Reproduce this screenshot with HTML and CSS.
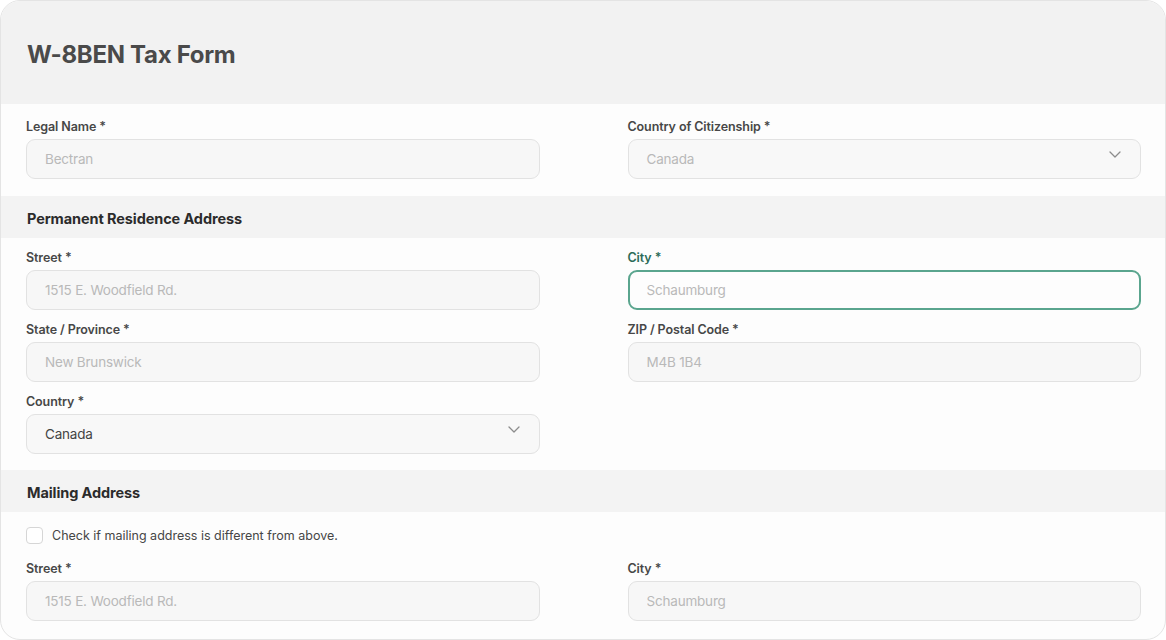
FILE: index.html
```html
<!DOCTYPE html>
<html lang="en">
<head>
    <meta charset="UTF-8">
    <meta name="viewport" content="width=device-width, initial-scale=1.0">
    <title>W-8BEN Tax Form</title>
    <link rel="stylesheet" href="styles.css">
</head>
<body>
    <div class="card">
        <div class="card-header">
            <h1>W-8BEN Tax Form</h1>
        </div>

        <div class="section first">
            <div class="grid">
                <div class="field">
                    <label>Legal Name *</label>
                    <input class="input" placeholder="Bectran" disabled>
                </div>
                <div class="field">
                    <label>Country of Citizenship *</label>
                    <div class="input select disabled">
                        <span>Canada</span>
                        <svg class="chevron" viewBox="0 0 12 7" width="12" height="7"><path d="M1 1l5 5 5-5"/></svg>
                    </div>
                </div>
            </div>
        </div>

        <div class="section-title">Permanent Residence Address</div>
        <div class="section">
            <div class="grid">
                <div class="field">
                    <label>Street *</label>
                    <input class="input" placeholder="1515 E. Woodfield Rd." disabled>
                </div>
                <div class="field focused">
                    <label>City *</label>
                    <input class="input" placeholder="Schaumburg">
                </div>
                <div class="field">
                    <label>State / Province *</label>
                    <input class="input" placeholder="New Brunswick" disabled>
                </div>
                <div class="field">
                    <label>ZIP / Postal Code *</label>
                    <input class="input" placeholder="M4B 1B4" disabled>
                </div>
                <div class="field">
                    <label>Country *</label>
                    <div class="input select">
                        <span>Canada</span>
                        <svg class="chevron" viewBox="0 0 12 7" width="12" height="7"><path d="M1 1l5 5 5-5"/></svg>
                    </div>
                </div>
            </div>
        </div>

        <div class="section-title">Mailing Address</div>
        <div class="section last">
            <label class="check">
                <span class="box"></span>
                Check if mailing address is different from above.
            </label>
            <div class="grid">
                <div class="field">
                    <label>Street *</label>
                    <input class="input" placeholder="1515 E. Woodfield Rd." disabled>
                </div>
                <div class="field">
                    <label>City *</label>
                    <input class="input" placeholder="Schaumburg" disabled>
                </div>
            </div>
        </div>
    </div>
</body>
</html>
```
FILE: styles.css
```css
body {
    margin: 0;
    font-family: 'Inter', 'Liberation Sans', sans-serif;
    background-color: #ffffff;
}

.card {
    box-sizing: border-box;
    width: 1166px;
    height: 640px;
    border: 1px solid #e4e4e4;
    border-radius: 20px;
    overflow: hidden;
    background-color: #fdfdfd;
}

.card-header {
    background-color: #f2f2f2;
    padding: 39px 26px 34px;
}

h1 {
    margin: 0;
    font-size: 24px;
    line-height: 30px;
    font-weight: 700;
    color: #4a4a4a;
    letter-spacing: -0.3px;
}

.section {
    padding: 12px 24px 16px 25px;
}
.section.first { padding-top: 15px; padding-bottom: 17px; }
.section.last { padding-top: 14px; }

.section-title {
    box-sizing: border-box;
    background-color: #f3f3f3;
    height: 42px;
    line-height: 42px;
    padding: 2px 26px 0;
    font-size: 14.5px;
    font-weight: 700;
    color: #2b2b2b;
    letter-spacing: -0.1px;
}

.grid {
    display: grid;
    grid-template-columns: 1fr 1fr;
    column-gap: 88px;
    row-gap: 12px;
}

.field label {
    display: block;
    font-size: 12.5px;
    line-height: 16px;
    font-weight: 600;
    color: #474747;
    margin-bottom: 4px;
    letter-spacing: -0.1px;
}

.input {
    box-sizing: border-box;
    display: block;
    width: 100%;
    height: 40px;
    margin: 0;
    padding: 0 18px;
    border: 1px solid #e2e2e2;
    border-radius: 9px;
    background-color: #f7f7f7;
    font-family: inherit;
    font-size: 13.5px;
    letter-spacing: -0.2px;
    color: #444;
    outline: none;
}
.input::placeholder { color: #b9b9b9; }

.select {
    display: flex;
    align-items: center;
    justify-content: space-between;
    padding-right: 19px;
    background-color: #f8f8f8;
}
.select.disabled span { color: #b9b9b9; }

.chevron {
    margin-bottom: 10px;
    fill: none;
    stroke: #8c8c8c;
    stroke-width: 1.3;
    stroke-linecap: round;
    stroke-linejoin: round;
}

.focused label { color: #2c6b58; }
.focused .input {
    border: 2px solid #5aa58e;
    padding-left: 17px;
    background-color: #fdfdfd;
}

.check {
    display: flex;
    align-items: center;
    gap: 9px;
    font-size: 12.5px;
    color: #464646;
    margin-bottom: 17px;
    height: 17px;
    padding-top: 1px;
}

.box {
    box-sizing: border-box;
    width: 17px;
    height: 17px;
    border: 1px solid #d6d6d6;
    border-radius: 4px;
    background-color: #fff;
}
```
